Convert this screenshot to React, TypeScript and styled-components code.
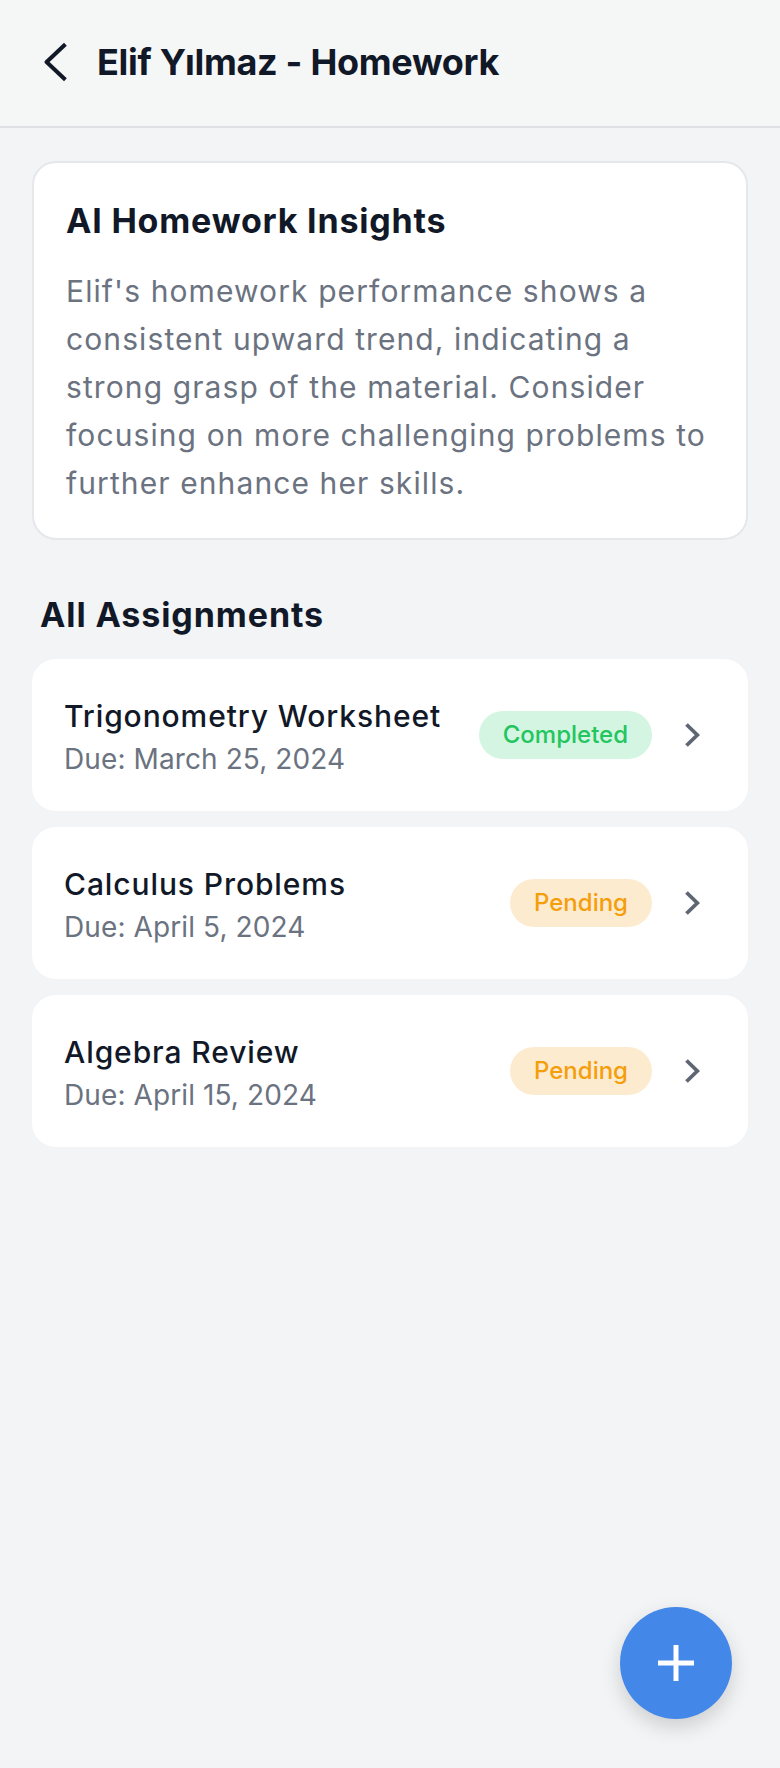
import React from "react";
import styled, { createGlobalStyle } from "styled-components";

const GlobalStyle = createGlobalStyle`
  html, body {
    margin: 0;
    padding: 0;
    background: #f3f4f6;
    font-family: Inter, "Noto Sans", "Liberation Sans", sans-serif;
  }
  * { box-sizing: border-box; }
`;

const Page = styled.div`
  min-height: 1768px;
  background: #f3f4f6;
  position: relative;
`;

const Header = styled.header`
  height: 128px;
  display: flex;
  align-items: center;
  padding: 0 32px 2px;
  background: #f5f6f6;
  border-bottom: 2px solid #dfe0e3;
`;

const BackButton = styled.button`
  display: flex;
  align-items: center;
  justify-content: center;
  padding: 12px;
  margin-right: 17px;
  background: none;
  border: none;
  cursor: pointer;
`;

const HeaderTitle = styled.h1`
  margin: 0;
  font-size: 36px;
  line-height: 44px;
  font-weight: 700;
  color: #111827;
  letter-spacing: -0.3px;
`;

const Content = styled.main`
  padding: 33px 32px 40px;
  display: flex;
  flex-direction: column;
`;

const InsightCard = styled.section`
  background: #ffffff;
  border: 2px solid #e5e7eb;
  border-radius: 24px;
  padding: 36px 32px 31px;
`;

const CardTitle = styled.h2`
  margin: 0 0 24px;
  font-size: 34px;
  line-height: 44px;
  font-weight: 700;
  color: #111827;
  letter-spacing: 0.8px;
`;

const InsightText = styled.p`
  margin: 0;
  font-size: 30px;
  line-height: 48px;
  color: #6b7280;
  letter-spacing: 1.1px;
`;

const SectionTitle = styled.h2`
  margin: 53px 0 22px;
  padding-left: 8px;
  font-size: 34px;
  line-height: 44px;
  font-weight: 700;
  color: #111827;
  letter-spacing: 0.9px;
`;

const List = styled.div`
  display: flex;
  flex-direction: column;
  gap: 16px;
`;

const Row = styled.div`
  height: 152px;
  background: #ffffff;
  border-radius: 24px;
  display: flex;
  align-items: center;
  padding: 0 32px;
`;

const RowText = styled.div`
  flex: 1;
  display: flex;
  flex-direction: column;
  padding-top: 3px;
`;

const RowTitle = styled.div`
  font-size: 30px;
  line-height: 42px;
  font-weight: 500;
  color: #111827;
  letter-spacing: 0.9px;
`;

const RowDue = styled.div`
  margin-top: 3px;
  font-size: 28px;
  line-height: 38px;
  color: #6b7280;
  letter-spacing: 0.1px;
`;

const Badge = styled.span<{ $status: "completed" | "pending" }>`
  height: 48px;
  line-height: 48px;
  padding: 0 24px;
  border-radius: 24px;
  font-size: 24px;
  font-weight: 500;
  background: ${(p) => (p.$status === "completed" ? "#d3f5e1" : "#fdebd0")};
  color: ${(p) => (p.$status === "completed" ? "#22c55e" : "#f59e0b")};
`;

const ChevronBox = styled.div`
  width: 48px;
  margin-left: 16px;
  display: flex;
  justify-content: center;
  align-items: center;
`;

const Fab = styled.button`
  position: fixed;
  right: 48px;
  bottom: 49px;
  width: 112px;
  height: 112px;
  border-radius: 50%;
  border: none;
  background: #4388e8;
  display: flex;
  align-items: center;
  justify-content: center;
  box-shadow: 0 8px 20px rgba(0, 0, 0, 0.16);
  cursor: pointer;
`;

type Assignment = {
  title: string;
  due: string;
  status: "completed" | "pending";
};

const assignments: Assignment[] = [
  { title: "Trigonometry Worksheet", due: "Due: March 25, 2024", status: "completed" },
  { title: "Calculus Problems", due: "Due: April 5, 2024", status: "pending" },
  { title: "Algebra Review", due: "Due: April 15, 2024", status: "pending" },
];

const BackIcon = () => (
  <svg width="24" height="40" viewBox="0 0 24 40" fill="none">
    <polyline
      points="21.4,2.2 2.6,20 21.4,37.8"
      stroke="#111827"
      strokeWidth="4"
      strokeLinecap="butt"
      strokeLinejoin="round"
    />
  </svg>
);

const ChevronIcon = () => (
  <svg width="16" height="26" viewBox="0 0 16 26" fill="none">
    <polyline
      points="2.5,2.5 13.3,13 2.5,23.5"
      stroke="#5f6673"
      strokeWidth="3.8"
      strokeLinecap="butt"
      strokeLinejoin="miter"
    />
  </svg>
);

const PlusIcon = () => (
  <svg width="36" height="36" viewBox="0 0 36 36" fill="none">
    <line x1="18" y1="0" x2="18" y2="36" stroke="#ffffff" strokeWidth="5" />
    <line x1="0" y1="18" x2="36" y2="18" stroke="#ffffff" strokeWidth="5" />
  </svg>
);

export default function App() {
  return (
    <Page>
      <GlobalStyle />
      <Header>
        <BackButton aria-label="Back">
          <BackIcon />
        </BackButton>
        <HeaderTitle>Elif Yılmaz - Homework</HeaderTitle>
      </Header>
      <Content>
        <InsightCard>
          <CardTitle>AI Homework Insights</CardTitle>
          <InsightText>
            Elif's homework performance shows a consistent upward trend, indicating a strong grasp of
            the material. Consider focusing on more challenging problems to further enhance her
            skills.
          </InsightText>
        </InsightCard>
        <SectionTitle>All Assignments</SectionTitle>
        <List>
          {assignments.map((a) => (
            <Row key={a.title}>
              <RowText>
                <RowTitle>{a.title}</RowTitle>
                <RowDue>{a.due}</RowDue>
              </RowText>
              <Badge $status={a.status}>
                {a.status === "completed" ? "Completed" : "Pending"}
              </Badge>
              <ChevronBox>
                <ChevronIcon />
              </ChevronBox>
            </Row>
          ))}
        </List>
      </Content>
      <Fab aria-label="Add assignment">
        <PlusIcon />
      </Fab>
    </Page>
  );
}
